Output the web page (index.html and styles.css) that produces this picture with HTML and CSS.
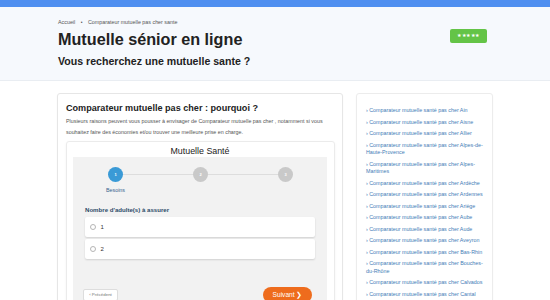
FILE: index.html
```html
<!DOCTYPE html>
<html lang="fr">
<head>
  <meta charset="UTF-8">
  <meta name="viewport" content="width=device-width, initial-scale=1">
  <title>Mutuelle sénior en ligne</title>
  <link rel="stylesheet" href="styles.css">
</head>
<body>

  <!-- Bande du haut -->
  <div class="topbar"></div>

  <!-- En-tete -->
  <header class="hero">
    <div class="container hero-inner">
      <div class="hero-text">
        <nav class="crumbs">
          <a href="#">Accueil</a>
          <span class="sep">•</span>
          <span>Comparateur mutuelle pas cher sante</span>
        </nav>
        <h1>Mutuelle sénior en ligne</h1>
        <h2>Vous recherchez une mutuelle sante ?</h2>
      </div>
      <span class="badge">★★★★★</span>
    </div>
  </header>

  <!-- Contenu -->
  <main class="container layout">
    <section class="card">
      <h3>Comparateur mutuelle pas cher : pourquoi ?</h3>
      <p class="intro">Plusieurs raisons peuvent vous pousser à envisager de Comparateur mutuelle pas cher , notamment si vous souhaitez faire des économies et/ou trouver une meilleure prise en charge.</p>

      <div class="quote">
        <div class="quote-title">Mutuelle Santé</div>
        <div class="quote-body">
          <div class="steps">
            <div class="step active">
              <span class="dot">1</span>
              <span class="step-label">Besoins</span>
            </div>
            <div class="step-line"></div>
            <div class="step">
              <span class="dot">2</span>
            </div>
            <div class="step-line"></div>
            <div class="step">
              <span class="dot">3</span>
            </div>
          </div>

          <div class="question">
            <div class="question-label">Nombre d'adulte(s) à assurer</div>
            <label class="option"><span class="radio"></span>1</label>
            <label class="option"><span class="radio"></span>2</label>
          </div>

          <div class="actions">
            <button class="btn-prev">‹ Précédent</button>
            <button class="btn-next">Suivant ❯</button>
          </div>
        </div>
      </div>
    </section>

    <aside class="side">
      <ul>
        <li><a href="#">› Comparateur mutuelle santé pas cher Ain</a></li>
        <li><a href="#">› Comparateur mutuelle santé pas cher Aisne</a></li>
        <li><a href="#">› Comparateur mutuelle santé pas cher Allier</a></li>
        <li><a href="#">› Comparateur mutuelle santé pas cher Alpes-de-Haute-Provence</a></li>
        <li><a href="#">› Comparateur mutuelle santé pas cher Alpes-Maritimes</a></li>
        <li><a href="#">› Comparateur mutuelle santé pas cher Ardèche</a></li>
        <li><a href="#">› Comparateur mutuelle santé pas cher Ardennes</a></li>
        <li><a href="#">› Comparateur mutuelle santé pas cher Ariège</a></li>
        <li><a href="#">› Comparateur mutuelle santé pas cher Aube</a></li>
        <li><a href="#">› Comparateur mutuelle santé pas cher Aude</a></li>
        <li><a href="#">› Comparateur mutuelle santé pas cher Aveyron</a></li>
        <li><a href="#">› Comparateur mutuelle santé pas cher Bas-Rhin</a></li>
        <li><a href="#">› Comparateur mutuelle santé pas cher Bouches-du-Rhône</a></li>
        <li><a href="#">› Comparateur mutuelle santé pas cher Calvados</a></li>
        <li><a href="#">› Comparateur mutuelle santé pas cher Cantal</a></li>
      </ul>
    </aside>
  </main>

</body>
</html>
```

FILE: styles.css
```css
/* Reset */
* {
  margin: 0;
  padding: 0;
  box-sizing: border-box;
}
body {
  font-family: 'Liberation Sans', Arial, sans-serif;
  background: #ffffff;
  color: #333333;
}
a {
  text-decoration: none;
}
.container {
  width: 436px;
  margin: 0 auto;
}

/* Bande + en-tete */
.topbar {
  height: 7px;
  background: #4f8ff0;
}
.hero {
  background: #f6f9fd;
  border-bottom: 1px solid #e9edf2;
  padding: 11px 0 12px;
}
.hero-inner {
  display: flex;
  justify-content: space-between;
  align-items: flex-start;
}
.crumbs {
  font-size: 5.35px;
  line-height: 8px;
  color: #555555;
  padding-left: 1px;
}
.crumbs a {
  color: #555555;
}
.crumbs .sep {
  margin: 0 4px;
  font-size: 5px;
}
h1 {
  font-size: 16.2px;
  line-height: 22px;
  color: #222222;
  margin-top: 2px;
  padding-left: 1px;
}
h2 {
  font-size: 10.6px;
  line-height: 14px;
  color: #222222;
  margin-top: 4px;
  padding-left: 1px;
}
.badge {
  margin: 11px 6px 0 0;
  width: 37px;
  height: 14px;
  background: #64c447;
  border-radius: 2px;
  color: #ffffff;
  font-size: 4.5px;
  line-height: 14px;
  text-align: center;
  letter-spacing: 0.6px;
}

/* Mise en page */
.layout {
  display: grid;
  grid-template-columns: 1fr 137px;
  column-gap: 13px;
  align-items: start;
  margin-top: 12px;
}

/* Carte principale */
.card {
  background: #ffffff;
  border: 1px solid #e6e6e6;
  border-radius: 3px;
  box-shadow: 0 1px 2px rgba(0, 0, 0, 0.04);
  padding: 7px 7px 0 8px;
}
.card h3 {
  font-size: 9.1px;
  line-height: 14px;
  color: #222222;
}
.intro {
  font-size: 5.35px;
  line-height: 11px;
  color: #555555;
  margin-top: 1px;
}
.quote {
  margin-top: 3px;
  border: 1px solid #ebebeb;
  border-radius: 3px;
  box-shadow: 0 1px 3px rgba(0, 0, 0, 0.05);
  padding: 4px 7px 0 6px;
}
.quote-title {
  font-size: 8.85px;
  line-height: 11px;
  text-align: center;
  color: #222222;
}
.quote-body {
  background: #f2f2f2;
  padding-top: 10px;
  height: 160px;
}

/* Etapes */
.steps {
  display: flex;
  align-items: flex-start;
  padding-left: 27.5px;
}
.step {
  width: 30px;
  display: flex;
  flex-direction: column;
  align-items: center;
  position: relative;
  z-index: 1;
}
.dot {
  width: 15px;
  height: 15px;
  border-radius: 50%;
  background: #c9c9c9;
  color: #ffffff;
  font-size: 4px;
  font-weight: bold;
  line-height: 15px;
  text-align: center;
}
.step.active .dot {
  background: #3a9ad6;
}
.step-label {
  font-size: 5.35px;
  line-height: 7px;
  color: #34628f;
  margin-top: 5px;
}
.step-line {
  width: 71px;
  height: 1.5px;
  margin: 6.8px -8px 0;
  background: #dddddd;
}

/* Question */
.question {
  padding: 0 12px;
  margin-top: 12px;
}
.question-label {
  font-size: 6.1px;
  font-weight: bold;
  line-height: 8px;
  color: #2c4a68;
  margin-bottom: 3px;
}
.option {
  display: flex;
  align-items: center;
  gap: 5px;
  height: 20px;
  margin-bottom: 2.3px;
  padding-left: 4.6px;
  background: #ffffff;
  border-radius: 2px;
  box-shadow: 0 1px 2px rgba(0, 0, 0, 0.14);
  font-size: 6px;
  color: #333333;
}
.radio {
  width: 6px;
  height: 6px;
  border: 0.6px solid #b5b5b5;
  border-radius: 50%;
  background: #ffffff;
}

/* Boutons */
.actions {
  display: flex;
  justify-content: space-between;
  align-items: flex-start;
  padding: 0 15px 0 10px;
  margin-top: 28px;
}
.btn-prev {
  width: 35px;
  height: 12px;
  margin-top: 1.7px;
  background: #ffffff;
  border: 1px solid #dddddd;
  border-radius: 2px;
  color: #777777;
  font-family: inherit;
  font-size: 4.4px;
}
.btn-next {
  width: 49px;
  height: 16px;
  background: #ee6c1d;
  border: none;
  border-radius: 8px;
  color: #ffffff;
  font-family: inherit;
  font-size: 6.6px;
  cursor: pointer;
}

/* Colonne laterale */
.side {
  border: 1px solid #ececec;
  border-radius: 3px;
  box-shadow: 0 1px 2px rgba(0, 0, 0, 0.03);
  padding: 13px 8px 20px 9px;
}
.side ul {
  list-style: none;
}
.side li {
  font-size: 5.35px;
  line-height: 7.5px;
  margin-bottom: 4px;
}
.side a {
  color: #3f7cb6;
}
```
